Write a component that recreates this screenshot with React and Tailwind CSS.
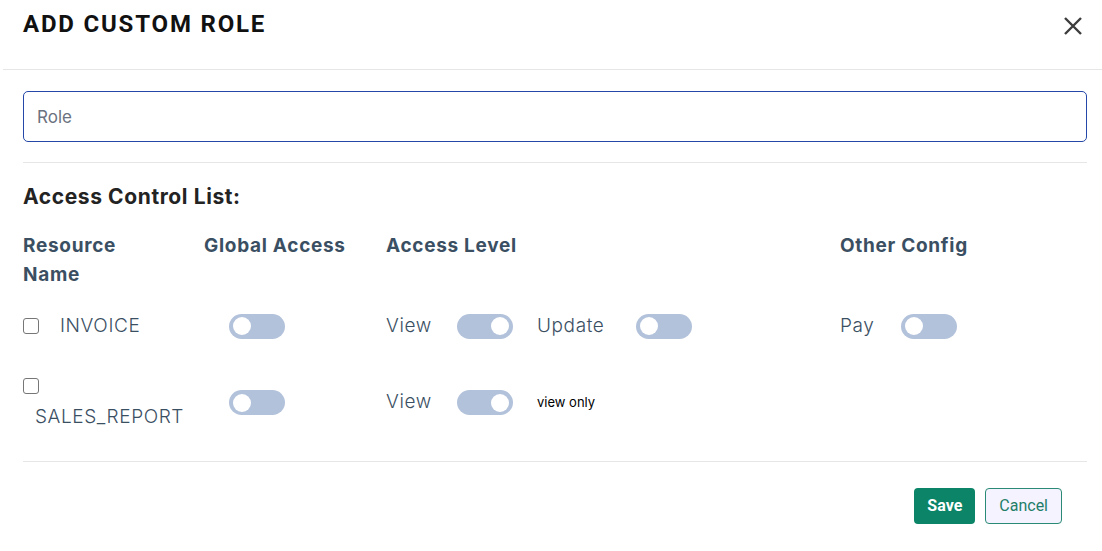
import React, { useState } from "react";

const POP = { fontFamily: "Inter, 'Noto Sans', sans-serif" };

const Toggle = ({ on }) => (
  <div className="w-[56px] h-[25px] rounded-full bg-[#b3c2db] flex items-center px-[4px] shrink-0">
    <div className={`w-[18px] h-[18px] rounded-full bg-white ${on ? "ml-auto" : ""}`}></div>
  </div>
);

const Check = () => (
  <div className="w-[16px] h-[16px] rounded-[3px] border-[1.5px] border-[#767676] bg-white shrink-0"></div>
);

const App = () => {
  const [role, setRole] = useState("");

  return (
    <div className="w-[1102px] h-[551px] bg-white overflow-hidden relative">
      {/* Header */}
      <div className="h-[70px] pl-[23px] pr-[18px] pt-[10px] flex items-start justify-between border-b border-[#e6e6e6] ml-[3px]">
        <h1
          className="text-[24px] font-bold tracking-[1.8px] text-[#111] leading-[29px] -ml-[3px]"
          style={{ fontFamily: "Roboto, sans-serif" }}
        >
          ADD CUSTOM ROLE
        </h1>
        <svg width="22" height="22" viewBox="0 0 22 22" className="mt-[5px]">
          <path d="M3 3 L19 19 M19 3 L3 19" stroke="#3d3d3d" strokeWidth="2.4" strokeLinecap="butt" />
        </svg>
      </div>

      <div className="px-[23px] pr-[15px]">
        {/* Role input */}
        <div className="pt-[21px] pb-[20px] border-b border-[#e6e6e6]">
          <input
            value={role}
            onChange={(e) => setRole(e.target.value)}
            placeholder="Role"
            className="w-full h-[51px] rounded-[5px] border border-[#2447a8] px-[13px] text-[17px] text-[#222] placeholder:text-[#6b7280] outline-none"
            style={{ fontFamily: "Inter, sans-serif" }}
          />
        </div>

        {/* Access Control List */}
        <div style={POP} className="border-b border-[#e6e6e6] pb-[34px]">
          <h2 className="text-[21px] font-bold tracking-[0.6px] text-[#232323] mt-[20px] leading-[28px]">Access Control List:</h2>

          <div className="grid grid-cols-[181px_182px_454px_1fr] text-[19px] font-bold tracking-[0.7px] text-[#3b4f63] leading-[29px] mt-[20px]">
            <div>Resource<br />Name</div>
            <div>Global Access</div>
            <div>Access Level</div>
            <div>Other Config</div>
          </div>

          {/* INVOICE */}
          <div className="grid grid-cols-[181px_182px_454px_1fr] items-center h-[50px] mt-[12px] text-[19px] font-light tracking-[0.6px] text-[#3b4f63]">
            <div className="flex items-center">
              <Check />
              <span className="ml-[21px]">INVOICE</span>
            </div>
            <div className="pl-[25px]"><Toggle /></div>
            <div className="flex items-center">
              <span className="w-[71px]">View</span>
              <Toggle on />
              <span className="ml-[24px] w-[99px]">Update</span>
              <Toggle />
            </div>
            <div className="flex items-center">
              <span className="w-[61px]">Pay</span>
              <Toggle />
            </div>
          </div>

          {/* SALES_REPORT */}
          <div className="grid grid-cols-[181px_182px_454px_1fr] items-center mt-[27px] text-[19px] font-light tracking-[0.6px] text-[#3b4f63]">
            <div className="flex flex-col">
              <Check />
              <span className="ml-[12px] mt-[13px] leading-[20px]">SALES_REPORT</span>
            </div>
            <div className="pl-[25px]"><Toggle /></div>
            <div className="flex items-center">
              <span className="w-[71px]">View</span>
              <Toggle on />
              <span className="ml-[24px] text-[13px] font-normal tracking-normal text-black">view only</span>
            </div>
            <div></div>
          </div>
        </div>

        {/* Footer */}
        <div className="flex justify-end gap-[10px] pt-[26px] pr-[25px]" style={{ fontFamily: "Roboto, sans-serif" }}>
          <button className="h-[36px] px-[13px] rounded-[4px] bg-[#0b8467] text-white font-bold text-[16px]">Save</button>
          <button className="h-[36px] px-[13px] rounded-[4px] bg-[#f5f3ff] border border-[#2a8a75] text-[#1f7e69] text-[16px]">Cancel</button>
        </div>
      </div>
    </div>
  );
};

export default App;
